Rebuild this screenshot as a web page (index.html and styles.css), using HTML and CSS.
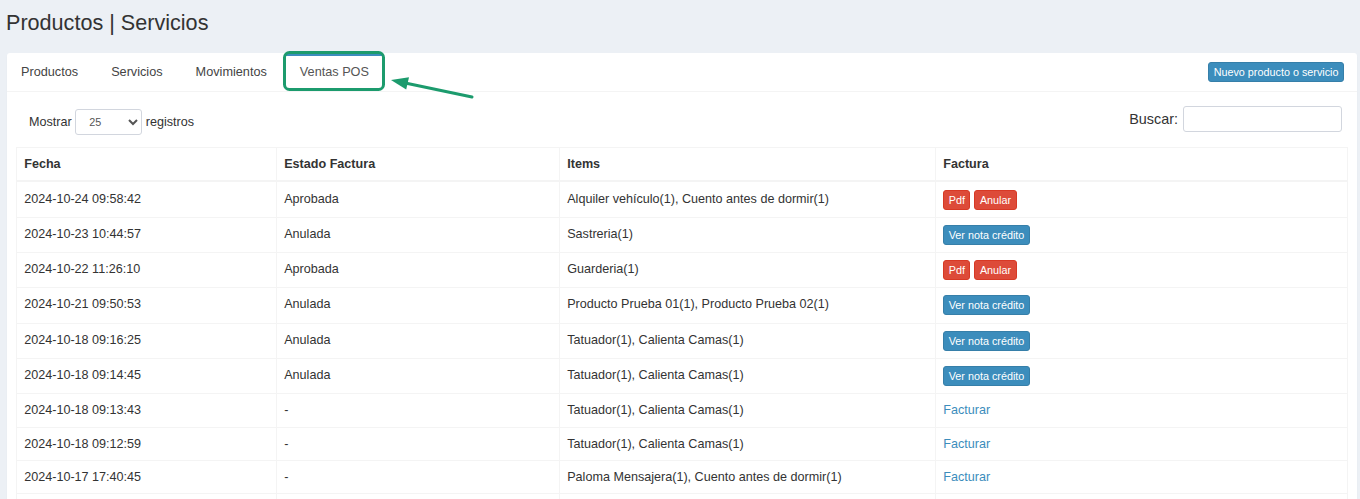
FILE: index.html
```html
<!DOCTYPE html>
<html lang="es">
<head>
<meta charset="utf-8">
<title>Productos | Servicios</title>
<link rel="stylesheet" href="styles.css">
</head>
<body>
<div class="page">
  <h1 class="title">Productos | Servicios</h1>
  <div class="box">
    <div class="tabs-bar">
      <ul class="tabs">
        <li class="tab"><a href="#">Productos</a></li>
        <li class="tab"><a href="#">Servicios</a></li>
        <li class="tab"><a href="#">Movimientos</a></li>
        <li class="tab active"><a href="#">Ventas POS</a></li>
      </ul>
      <button class="btn btn-primary btn-new">Nuevo producto o servicio</button>
    </div>
    <div class="box-body">
      <div class="controls">
        <div class="length">
          <span>Mostrar</span>
          <select class="select-sm">
            <option>10</option>
            <option selected>25</option>
            <option>50</option>
            <option>100</option>
          </select>
          <span>registros</span>
        </div>
        <div class="search">
          <span>Buscar:</span>
          <input class="search-input" type="text">
        </div>
      </div>
      <table class="grid">
        <colgroup>
          <col class="c1"><col class="c2"><col class="c3"><col class="c4">
        </colgroup>
        <thead>
          <tr><th>Fecha</th><th>Estado Factura</th><th>Items</th><th>Factura</th></tr>
        </thead>
        <tbody>
          <tr><td>2024-10-24 09:58:42</td><td>Aprobada</td><td>Alquiler vehículo(1), Cuento antes de dormir(1)</td><td><div class="actions"><button class="btn btn-danger">Pdf</button><button class="btn btn-danger">Anular</button></div></td></tr>
          <tr><td>2024-10-23 10:44:57</td><td>Anulada</td><td>Sastreria(1)</td><td><div class="actions"><button class="btn btn-primary">Ver nota crédito</button></div></td></tr>
          <tr><td>2024-10-22 11:26:10</td><td>Aprobada</td><td>Guarderia(1)</td><td><div class="actions"><button class="btn btn-danger">Pdf</button><button class="btn btn-danger">Anular</button></div></td></tr>
          <tr><td>2024-10-21 09:50:53</td><td>Anulada</td><td>Producto Prueba 01(1), Producto Prueba 02(1)</td><td><div class="actions"><button class="btn btn-primary">Ver nota crédito</button></div></td></tr>
          <tr><td>2024-10-18 09:16:25</td><td>Anulada</td><td>Tatuador(1), Calienta Camas(1)</td><td><div class="actions"><button class="btn btn-primary">Ver nota crédito</button></div></td></tr>
          <tr><td>2024-10-18 09:14:45</td><td>Anulada</td><td>Tatuador(1), Calienta Camas(1)</td><td><div class="actions"><button class="btn btn-primary">Ver nota crédito</button></div></td></tr>
          <tr><td>2024-10-18 09:13:43</td><td>-</td><td>Tatuador(1), Calienta Camas(1)</td><td><a class="link" href="#">Facturar</a></td></tr>
          <tr><td>2024-10-18 09:12:59</td><td>-</td><td>Tatuador(1), Calienta Camas(1)</td><td><a class="link" href="#">Facturar</a></td></tr>
          <tr><td>2024-10-17 17:40:45</td><td>-</td><td>Paloma Mensajera(1), Cuento antes de dormir(1)</td><td><a class="link" href="#">Facturar</a></td></tr>
          <tr class="row-empty"><td></td><td></td><td></td><td></td></tr>
        </tbody>
      </table>
    </div>
  </div>
  <svg class="annotation" width="1360" height="499" viewBox="0 0 1360 499" aria-hidden="true">
    <rect x="284.5" y="52.5" width="99" height="37" rx="5" ry="5" fill="none" stroke="#1c9b6d" stroke-width="3"/>
    <line x1="472" y1="97" x2="404" y2="82.8" stroke="#1c9b6d" stroke-width="3" stroke-linecap="round"/>
    <polygon points="391,80 409,77.2 406.2,89.6" fill="#1c9b6d"/>
  </svg>
</div>
</body>
</html>
```
FILE: styles.css
```css
html, body {
  margin: 0;
  padding: 0;
  background: #ecf0f5;
  font-family: "Liberation Sans", Arial, Helvetica, sans-serif;
  color: #333;
}

.page {
  position: relative;
  padding: 10.5px 3px 0 7px;
  height: 499px;
  box-sizing: border-box;
  overflow: hidden;
}

.title {
  margin: 0 0 18.5px -1px;
  font-size: 21.6px;
  line-height: 24px;
  font-weight: 400;
  color: #333;
}

.box {
  background: #fff;
  border-radius: 3px;
  box-shadow: 0 1px 1px rgba(0, 0, 0, 0.08);
}

.tabs-bar {
  display: flex;
  align-items: center;
  height: 38px;
  border-bottom: 1px solid #f4f4f4;
}

.tabs {
  display: flex;
  list-style: none;
  margin: 0;
  padding: 0;
  height: 38px;
}

.tab {
  margin-right: 5px;
}

.tab a {
  display: block;
  padding: 0 14px;
  line-height: 38px;
  font-size: 12.7px;
  color: #444;
  text-decoration: none;
}

.tab.active a {
  box-shadow: inset 0 3px 0 #3c8dbc;
  color: #555;
}

.btn {
  font-family: inherit;
  font-size: 10.8px;
  line-height: 16.2px;
  padding: 0.9px 4.5px;
  border: 1px solid transparent;
  border-radius: 3px;
  color: #fff;
  cursor: pointer;
  box-sizing: content-box;
}

.btn-primary {
  background: #3c8dbc;
  border-color: #367fa9;
}

.btn-danger {
  background: #dd4b39;
  border-color: #d73925;
}

.btn-new {
  margin-left: auto;
  margin-right: 13px;
}

.box-body {
  padding: 0 9px 10px 9px;
}

.controls {
  display: flex;
  justify-content: space-between;
  align-items: flex-start;
  margin-bottom: 12px;
}

.length {
  display: flex;
  align-items: center;
  gap: 3.5px;
  margin-top: 17px;
  padding-left: 13px;
  font-size: 12.6px;
}

.select-sm {
  width: 67px;
  height: 26px;
  border: 1px solid #d2d6de;
  border-radius: 3px;
  background: #fff;
  font-family: inherit;
  font-size: 10.8px;
  color: #555;
  padding: 0 6px 0 9px;
}

.search {
  display: flex;
  align-items: center;
  gap: 5px;
  margin-top: 14px;
  padding-right: 6px;
  font-size: 14.4px;
}

.search-input {
  width: 159px;
  height: 26px;
  box-sizing: border-box;
  border: 1px solid #d2d6de;
  border-radius: 3px;
  background: #fff;
}

.grid {
  width: 100%;
  border-collapse: collapse;
  table-layout: fixed;
  border: 1px solid #f4f4f4;
}

.c1 { width: 260px; }
.c2 { width: 283px; }
.c3 { width: 376px; }
.c4 { width: auto; }

.grid th,
.grid td {
  border: 1px solid #f4f4f4;
  padding: 7.2px;
  font-size: 12.6px;
  line-height: 18.1px;
  text-align: left;
  vertical-align: top;
  color: #333;
}

.grid thead th {
  font-weight: 700;
  border-bottom: 2px solid #f4f4f4;
}

.row-empty td {
  height: 18.1px;
}

.actions {
  display: flex;
  gap: 4px;
  height: 19.9px;
}

.link {
  color: #3c8dbc;
  text-decoration: none;
}

.annotation {
  position: absolute;
  left: 0;
  top: 0;
  pointer-events: none;
}
```
